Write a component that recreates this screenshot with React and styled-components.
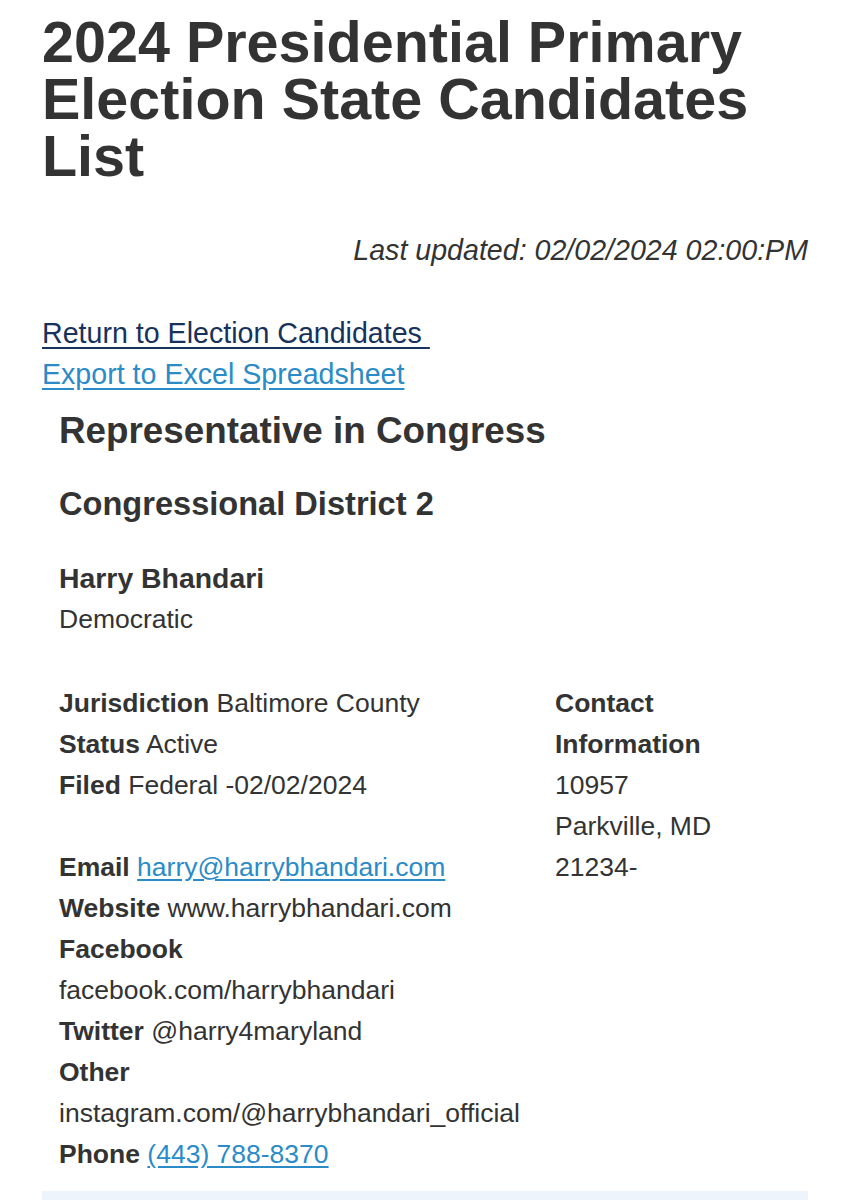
import React from 'react'
import styled, { createGlobalStyle } from 'styled-components'

const GlobalStyle = createGlobalStyle`
  html, body { margin: 0; padding: 0; background: #fff; }
  body { font-family: "Liberation Sans", Arial, sans-serif; color: #333; }
`

const Page = styled.div`
  padding: 14px 42px 0 42px;
`

const Title = styled.h1`
  font-size: 57.5px;
  line-height: 57px;
  font-weight: 700;
  margin: 0;
  color: #333;
`

const Updated = styled.p`
  font-style: italic;
  font-size: 28.6px;
  line-height: 34px;
  text-align: right;
  margin: 48px 0 0 0;
`

const Links = styled.div`
  display: flex;
  flex-direction: column;
  margin-top: 46px;
  line-height: 41px;
`

const NavLink = styled.a`
  font-size: 28.6px;
  color: ${p => (p.dark ? '#17325c' : '#2a8bc7')};
  text-decoration: underline;
  text-underline-offset: 4px;
  align-self: flex-start;
`

const Office = styled.section`
  padding: 0 17px;
`

const OfficeTitle = styled.h2`
  font-size: 36.8px;
  line-height: 40px;
  margin: 16px 0 0 0;
`

const District = styled.h3`
  font-size: 32.6px;
  line-height: 36px;
  margin: 35px 0 0 0;
`

const Candidate = styled.div`
  margin-top: 36px;
  font-size: 26.5px;
  line-height: 41px;
`

const Name = styled.div`
  font-weight: 700;
  font-size: 28.4px;
`

const Details = styled.div`
  display: grid;
  grid-template-columns: 496px 1fr;
  margin-top: 43px;
`

const Column = styled.div`
  display: flex;
  flex-direction: column;
`

const Gap = styled.div`
  height: 41px;
`

const Label = styled.b`
  font-weight: 700;
`

const Link = styled.a`
  color: #2a8bc7;
  text-decoration: underline;
  text-underline-offset: 3px;
`

const Footer = styled.div`
  margin-top: 16px;
  height: 40px;
  background: #eef4fb;
`

const Field = ({ label, children }) => (
  <div>
    <Label>{label}</Label> {children}
  </div>
)

export default function App() {
  return (
    <>
      <GlobalStyle />
      <Page>
        <Title>2024 Presidential Primary Election State Candidates List</Title>
        <Updated>Last updated: 02/02/2024 02:00:PM</Updated>
        <Links>
          <NavLink dark href="#">Return to Election Candidates&nbsp;</NavLink>
          <NavLink href="#">Export to Excel Spreadsheet</NavLink>
        </Links>
        <Office>
          <OfficeTitle>Representative in Congress</OfficeTitle>
          <District>Congressional District 2</District>
          <Candidate>
            <Name>Harry Bhandari</Name>
            <div>Democratic</div>
            <Details>
              <Column>
                <Field label="Jurisdiction">Baltimore County</Field>
                <Field label="Status">Active</Field>
                <Field label="Filed">Federal -02/02/2024</Field>
                <Gap />
                <Field label="Email"><Link href="#">harry@harrybhandari.com</Link></Field>
                <Field label="Website">www.harrybhandari.com</Field>
                <Label>Facebook</Label>
                <div>facebook.com/harrybhandari</div>
                <Field label="Twitter">@harry4maryland</Field>
                <Label>Other</Label>
                <div>instagram.com/@harrybhandari_official</div>
                <Field label="Phone"><Link href="#">(443) 788-8370</Link></Field>
              </Column>
              <Column>
                <Label>Contact</Label>
                <Label>Information</Label>
                <div>10957</div>
                <div>Parkville, MD</div>
                <div>21234-</div>
              </Column>
            </Details>
          </Candidate>
        </Office>
        <Footer />
      </Page>
    </>
  )
}
